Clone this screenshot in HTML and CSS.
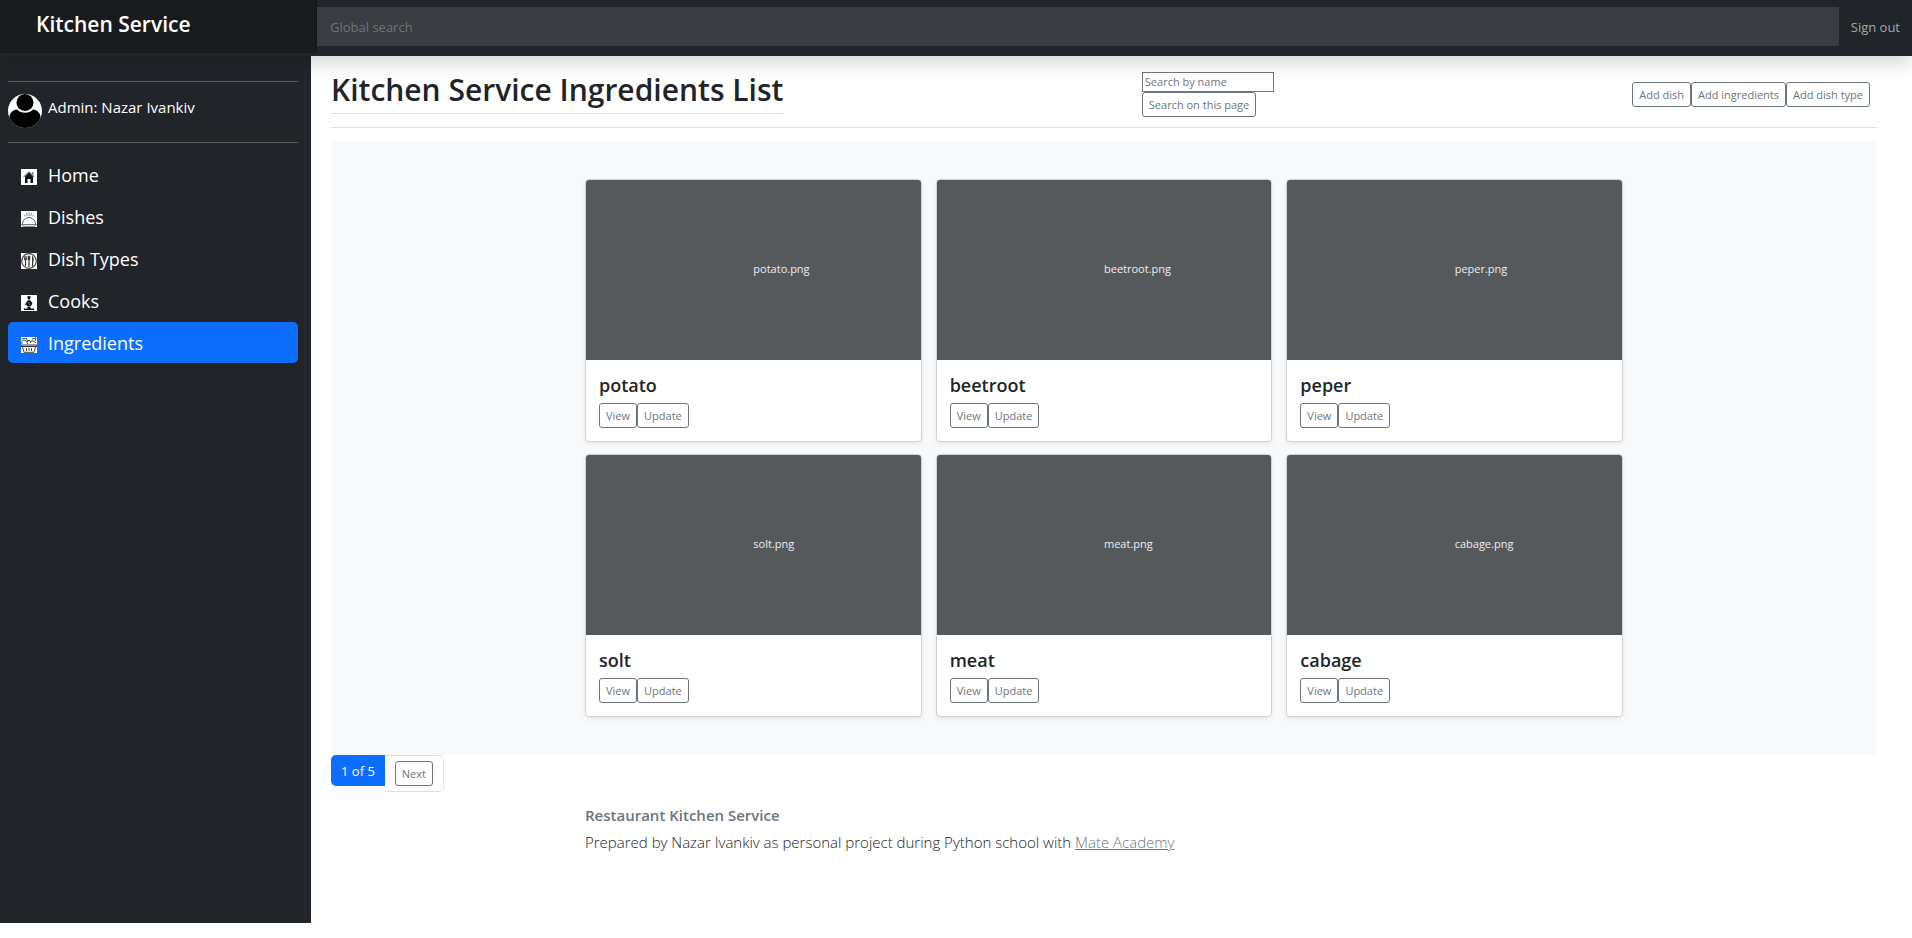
FILE: index.html
```html
<!DOCTYPE html>
<html lang="en">
<head>
<meta charset="utf-8">
<title>Kitchen Service</title>
<link rel="stylesheet" href="styles.css">
</head>
<body>
<header class="topbar">
  <a class="brand" href="#">Kitchen Service</a>
  <input class="global-search" type="search" placeholder="Global search" aria-label="Global search">
  <a class="sign-out" href="#">Sign out</a>
</header>
<div class="shell">
  <aside class="sidebar">
    <hr class="rule">
    <div class="user">
      <svg class="avatar" viewBox="0 0 34 34" aria-hidden="true">
        <defs><clipPath id="disc"><circle cx="17" cy="17" r="17"/></clipPath></defs>
        <g clip-path="url(#disc)">
          <rect width="34" height="34" fill="#fff"/>
          <path d="M1 34V26C1 19 5 15.500 9 15.500C13 19.800 21 19.800 25 15.500C29 15.500 33 19 33 26V34Z"/>
          <circle cx="17" cy="8.500" r="8.500"/>
        </g>
      </svg>
      <span class="user-name">Admin: Nazar Ivankiv</span>
    </div>
    <hr class="rule">
    <nav class="menu" aria-label="Main">
      <a class="menu-link" href="#">
        <svg class="menu-icon" viewBox="0 0 16 16" aria-hidden="true"><rect width="16" height="16" fill="#fff"/><path d="M8 3.500 4 7.500V14H6.500V10H9.500V14H12V7.500Z" fill="#111"/><path d="M2.500 8 8 2.800 13.500 8M11.800 3V5.500" fill="none" stroke="#444" stroke-width="1"/></svg>
        Home</a>
      <a class="menu-link" href="#">
        <svg class="menu-icon" viewBox="0 0 16 16" aria-hidden="true"><rect width="16" height="16" fill="#fff"/><g fill="none" stroke="#444"><path d="M1.500 13C2 4.500 14 4.500 14.500 13" stroke-width=".9"/><path d="M.5 13.500H15.500L14 15.300H2Z" stroke-width=".7"/><path d="M8 1V5M5.500 2 6.200 5M10.500 2 9.800 5M3.500 3.500 4.500 5.500M12.300 3.500 11.500 5.500" stroke-width=".6"/></g></svg>
        Dishes</a>
      <a class="menu-link" href="#">
        <svg class="menu-icon" viewBox="0 0 16 16" aria-hidden="true"><rect width="16" height="16" fill="#fff"/><circle cx="8" cy="8" r="7.300" fill="none" stroke="#444" stroke-width="1.200"/><g fill="#333"><ellipse cx="8" cy="5" rx="1.400" ry="2.400"/><path d="M7.400 7H8.600V14H7.400ZM3 3H3.700V5.500H4.200V3H4.900V5.500H5.400V3H6V6.500L5.100 7.500V13H4V7.500L3 6.500ZM11 2.500C13 4 13 8 12.200 9V13.500H11Z"/></g></svg>
        Dish Types</a>
      <a class="menu-link" href="#">
        <svg class="menu-icon" viewBox="0 0 16 16" aria-hidden="true"><rect width="16" height="16" fill="#fff"/><g fill="#111"><path d="M6.200 1.500Q8 .3 9.800 1.500L9 4.600H7ZM5 8 7 5.300H9L11.500 8 10 11H6L5.500 9.500 3.500 10.500ZM6.500 11.500H9.500V13.500H13V15H3V13.500H6.500Z"/></g><path d="M7 7 9 10" stroke="#bbb" stroke-width=".6"/></svg>
        Cooks</a>
      <a class="menu-link menu-link-active" href="#" aria-current="page">
        <svg class="menu-icon" viewBox="0 0 16 16" aria-hidden="true"><rect width="16" height="16" fill="#fff"/><g fill="none" stroke="#333"><path d="M1 7C0 4 3 2 5 4L7 7M1 2 5 1 7 5M6 4Q8 2 10 5M9 6Q10 3 12 4T15 6M11 2 15 1 14 4" stroke-width=".9"/><path d="M.5 8H15.500V9.500H.5Z"/><path d="M1.500 10 3 15.300H13L14.500 10" stroke-width=".9"/><path d="M5.500 11V14M8 11V14M10.500 11V14" stroke-width=".9"/></g></svg>
        Ingredients</a>
    </nav>
  </aside>
  <main class="content">
    <div class="page-head">
      <h1 class="page-title">Kitchen Service Ingredients List</h1>
      <form class="page-search">
        <input class="name-input" type="text" placeholder="Search by name" aria-label="Search by name">
        <button class="btn" type="submit">Search on this page</button>
      </form>
      <div class="btn-row page-actions">
        <button class="btn" type="button">Add dish</button>
        <button class="btn" type="button">Add ingredients</button>
        <button class="btn" type="button">Add dish type</button>
      </div>
    </div>
    <section class="album" aria-label="Ingredients">
      <div class="cards">
        <article class="card">
          <div class="thumb"><span class="thumb-label">potato.png</span></div>
          <div class="card-body"><h2 class="card-title">potato</h2>
          <div class="btn-row"><button class="btn" type="button">View</button><button class="btn" type="button">Update</button></div></div>
        </article>
        <article class="card">
          <div class="thumb"><span class="thumb-label">beetroot.png</span></div>
          <div class="card-body"><h2 class="card-title">beetroot</h2>
          <div class="btn-row"><button class="btn" type="button">View</button><button class="btn" type="button">Update</button></div></div>
        </article>
        <article class="card">
          <div class="thumb"><span class="thumb-label">peper.png</span></div>
          <div class="card-body"><h2 class="card-title">peper</h2>
          <div class="btn-row"><button class="btn" type="button">View</button><button class="btn" type="button">Update</button></div></div>
        </article>
        <article class="card">
          <div class="thumb"><span class="thumb-label">solt.png</span></div>
          <div class="card-body"><h2 class="card-title">solt</h2>
          <div class="btn-row"><button class="btn" type="button">View</button><button class="btn" type="button">Update</button></div></div>
        </article>
        <article class="card">
          <div class="thumb"><span class="thumb-label">meat.png</span></div>
          <div class="card-body"><h2 class="card-title">meat</h2>
          <div class="btn-row"><button class="btn" type="button">View</button><button class="btn" type="button">Update</button></div></div>
        </article>
        <article class="card">
          <div class="thumb"><span class="thumb-label">cabage.png</span></div>
          <div class="card-body"><h2 class="card-title">cabage</h2>
          <div class="btn-row"><button class="btn" type="button">View</button><button class="btn" type="button">Update</button></div></div>
        </article>
      </div>
    </section>
    <nav class="pagination" aria-label="Pages">
      <span class="page-current">1 of 5</span>
      <span class="page-next"><button class="btn" type="button">Next</button></span>
    </nav>
    <footer class="footer">
      <p class="footer-title">Restaurant Kitchen Service</p>
      <p class="footer-text">Prepared by Nazar Ivankiv as personal project during Python school with <a class="footer-link" href="#">Mate Academy</a></p>
    </footer>
  </main>
</div>
</body>
</html>
```
FILE: styles.css
```css
* { box-sizing: border-box; }

body {
  margin: 0;
  min-height: 100vh;
  padding-bottom: 15px;
  display: flex;
  flex-direction: column;
  font-family: "Segoe UI", "Open Sans", "Noto Sans", sans-serif;
  font-size: 13px;
  line-height: 20px;
  color: #212529;
  background: #fff;
}

h1, h2, p { margin: 0; }
a { color: inherit; text-decoration: none; }
input, button { font: inherit; }

/* Top bar */
.topbar {
  position: relative;
  z-index: 1;
  display: flex;
  align-items: flex-start;
  height: 56px;
  background: #212529;
  box-shadow: 0 8px 16px rgba(0, 0, 0, .15);
}
.brand {
  flex: 0 0 317px;
  height: 53px;
  padding: 10px 36px;
  font-size: 21px;
  font-weight: 600;
  line-height: 28px;
  color: #fff;
  background: rgba(0, 0, 0, .25);
  box-shadow: inset -1px 0 0 rgba(0, 0, 0, .25);
}
.global-search {
  flex: 1;
  height: 39px;
  margin-top: 7px;
  padding: 0 13px;
  border: 0;
  color: #fff;
  background: #393c40;
}
.global-search::placeholder { color: #6c757d; opacity: 1; }
.sign-out { padding: 17px 12px; color: #a6a8a9; white-space: nowrap; }

/* Sidebar */
.shell { display: flex; flex: 1; }
.sidebar {
  flex: 0 0 311px;
  padding: 25px 13px 0 8px;
  color: #fff;
  background: #212529;
}
.rule { margin: 0; border: 0; border-top: 1px solid #585b5e; }
.user { display: flex; gap: 6px; height: 60px; padding-top: 12px; }
.avatar { width: 34px; height: 34px; }
.user-name { font-size: 15px; line-height: 26px; }
.menu { display: flex; flex-direction: column; padding-top: 11px; gap: 1px; }
.menu-link {
  display: flex;
  align-items: center;
  gap: 11px;
  height: 41px;
  padding-left: 13px;
  border-radius: 5px;
  font-size: 18px;
}
.menu-link-active { background: #0d6efd; }
.menu-icon { width: 16px; height: 16px; margin-top: 5px; }

/* Page heading */
.content { flex: 1; min-width: 0; padding: 0 35px 0 20px; }
.page-head {
  display: flex;
  align-items: center;
  justify-content: space-between;
  height: 72px;
  padding-top: 6px;
  border-bottom: 1px solid #dee2e6;
}
.page-title {
  padding-bottom: 8px;
  border-bottom: 1px solid #dee2e6;
  font-size: 30px;
  font-weight: 600;
  line-height: 30px;
}
.page-search { display: flex; flex-direction: column; align-items: flex-start; }
.name-input {
  width: 132px;
  height: 20px;
  padding: 1px 2px;
  border: 1px solid #767676;
  font-size: 11px;
}
.name-input::placeholder { color: #757575; opacity: 1; }
.page-actions { margin-right: 7px; }

.btn-row { display: flex; }
.btn {
  height: 25px;
  padding: 0 6px;
  border: 1px solid #6c757d;
  border-radius: 3px;
  font-size: 11px;
  line-height: 18px;
  color: #6c757d;
  background: #fff;
  white-space: nowrap;
}

/* Cards */
.album { margin-top: 13px; padding: 38px 14px; background: #f8f9fa; }
.cards {
  display: grid;
  grid-template-columns: repeat(3, 1fr);
  gap: 12px 14px;
  max-width: 1038px;
  margin: 0 auto;
}
.card {
  border: 1px solid #d0d2d4;
  border-radius: 4px;
  overflow: hidden;
  background: #fff;
  box-shadow: 0 2px 4px rgba(0, 0, 0, .075);
}
.thumb { display: flex; align-items: center; height: 180px; padding-bottom: 3px; background: #55595c; }
.thumb-label { padding-left: 50%; font-size: 11px; color: #eceeef; }
.card-body { padding: 14px 13px 13px; }
.card-title { margin-bottom: 7px; font-size: 18px; font-weight: 600; line-height: 22px; }

/* Pagination */
.pagination { display: flex; align-items: flex-start; }
.page-current {
  padding: 6px 10px 5px;
  border-radius: 5px 0 0 5px;
  color: #fff;
  background: #0d6efd;
}
.page-next {
  display: flex;
  padding: 5px 10px;
  border: 1px solid #dee2e6;
  border-left-width: 0;
  border-radius: 0 5px 5px 0;
}

/* Footer */
.footer { max-width: 1038px; margin: 0 auto; padding-top: 9px; }
.footer-title { font-size: 15px; font-weight: 600; line-height: 28px; color: #6c757d; }
.footer-text { font-size: 15px; font-weight: 300; line-height: 26px; }
.footer-link { color: #6c757d; text-decoration: underline; }
```
